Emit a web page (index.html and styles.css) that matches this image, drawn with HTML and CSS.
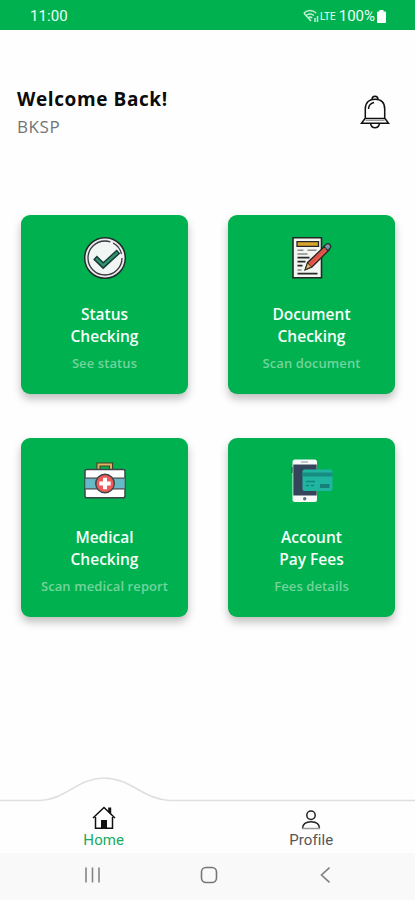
FILE: index.html
```html
<!DOCTYPE html>
<html lang="en">
<head>
<meta charset="utf-8">
<title>Home</title>
<link rel="stylesheet" href="styles.css">
</head>
<body>
<div class="status">
  <span class="time">11:00</span>
  <div class="indicators">
    <svg class="wifi" width="17" height="14" viewBox="0 0 17 14" fill="none" stroke="#c5f0d6" stroke-width="1.500"><path d="M.8 4Q7 -.8 13.2 4M3 6.500Q7 3.300 11 6.500M5 9Q7.200 7.200 9.200 9M1 4.200L8 12M12 9v4M14.500 7v6"/></svg>
    <span class="lte">LTE</span>
    <span class="percent">100%</span>
    <svg class="battery" width="9" height="13" viewBox="0 0 9 13" fill="#fff"><path d="M2.500 0h4v1.500H8q1 0 1 1V12q0 1-1 1H1q-1 0-1-1V2.500q0-1 1-1h1.500z"/></svg>
  </div>
</div>
<header class="header">
  <div>
    <h1 class="welcome">Welcome Back!</h1>
    <p class="user">BKSP</p>
  </div>
  <svg class="bell" width="30" height="34" viewBox="0 0 30 34" fill="none" stroke="#111" stroke-width="1.500"><path d="M12 4.500Q12 1.200 15 1.200T18 4.500M5.300 23.500V14C5.300 7 9.500 4.200 15 4.200S24.700 7 24.700 14v9.500M5 23.500h20l3.500 4.700h-27zM10.500 28.500q1 4.300 4.500 4.300t4.500-4.300M8.500 14q0-5 5.500-6.500"/><path d="M5.500 25.500h19" stroke="#999" stroke-width="1"/></svg>
</header>
<main class="grid">
  <section class="card">
    <svg class="art" width="44" height="44" viewBox="0 0 44 44"><circle cx="22" cy="22" r="20.300" fill="#eee9ee" stroke="#222b2b" stroke-width="1.500"/><circle cx="22" cy="22" r="17" fill="#f1f6f5" stroke="#343a3b" stroke-width="1.300" stroke-dasharray="85 3 14 5"/><path d="M12 21.500l8.200 8L35.500 15.500" fill="none" stroke="#173b34" stroke-width="5.300"/><path d="M13 22.500l7.200 6.900 14.300-13" fill="none" stroke="#319373" stroke-width="2.400"/></svg>
    <h2 class="title">Status<br>Checking</h2>
    <p class="sub">See status</p>
  </section>
  <section class="card">
    <svg class="art" width="44" height="44" viewBox="0 0 44 44"><path d="M3 1.700h28.500v40H3z" fill="#f4f4f1" stroke="#252827" stroke-width="1.600"/><path d="M7 5.700h21.500v4.600H7z" fill="#daa52e" stroke="#252827" stroke-width="1.300"/><path d="M7.500 14.300h6m4 0h9M7.500 18h10M7.500 34h4" stroke="#868b88" stroke-width="1.500"/><path d="M7.500 21.700h12m-12 4h8m-8 4h5m-5 8h20" stroke="#272b29" stroke-width="1.700"/><path d="M15.200 33.700l2.500-7.200L35 10l4 4-17 17z" fill="#e65849" stroke="#252827" stroke-width="1.400"/><path d="M15.200 33.700l2.300-6.800 4.200 4z" fill="#e5b55a" stroke="#252827"/><path d="M34 10.500l2.200-2.300q2-1.300 3.800.5 1.700 2-.2 3.800L37.800 14.700z" fill="#7799a5" stroke="#252b2d" stroke-width="1.200"/><path d="M20 28L35.500 12.500" stroke="#d3473d"/></svg>
    <h2 class="title">Document<br>Checking</h2>
    <p class="sub">Scan document</p>
  </section>
  <section class="card">
    <svg class="art" width="44" height="44" viewBox="0 0 44 44"><path d="M15.500 11V5.500H28V11" fill="none" stroke="#493d2b" stroke-width="4.200"/><path d="M15.500 11V5.500H28V11" fill="none" stroke="#dbb365" stroke-width="2"/><rect x="2" y="10.500" width="40" height="28.200" rx="1.800" fill="#fff" stroke="#3d4548" stroke-width="1.500"/><path d="M2.500 19.500h39v10h-39z" fill="#67b9c7"/><path d="M2.500 19.200h39m-39 10.600h39" stroke="#3d4548" stroke-width="1.300"/><circle cx="22" cy="24.500" r="9.300" fill="#ee5a59" stroke="#3d4548" stroke-width="1.400"/><path d="M22 18.800v11.400M16.300 24.500h11.400" stroke="#fff" stroke-width="4"/></svg>
    <h2 class="title">Medical<br>Checking</h2>
    <p class="sub">Scan medical report</p>
  </section>
  <section class="card">
    <svg class="art" width="44" height="44" viewBox="0 0 44 44"><rect x="2.500" y=".5" width="24.500" height="42.500" rx="2.500" fill="#f8fafa"/><path d="M3.300 5.500h23.400v31H3.300z" fill="#34445a"/><path d="M2 8v6" stroke="#34445a"/><path d="M11 3h7" stroke="#9ca5aa" stroke-width="1.200"/><circle cx="14.700" cy="39.800" r="1.700" fill="#626e78"/><rect x="12.500" y="10.500" width="30" height="21.500" rx="2" fill="#1fb5a0"/><path d="M12.500 13.500h30v4h-30z" fill="#168d80"/><path d="M16 22.500h9M16 26.500h3m2 0h3" stroke="#108779" stroke-width="1.300"/><path d="M30 25h9.500v4h-9.500z" fill="#167f78"/></svg>
    <h2 class="title">Account<br>Pay Fees</h2>
    <p class="sub">Fees details</p>
  </section>
</main>
<nav class="tabs">
  <svg class="curve" width="415" height="30" viewBox="0 0 415 30" fill="none" stroke="#dfdfdf" stroke-width="1.700"><path d="M0 23.500H40C65 23 78 1 104 1S145 23 170 23.500H415"/></svg>
  <a class="tab active">
    <svg width="26" height="24" viewBox="0 0 26 24" fill="none" stroke="#111" stroke-width="1.500"><path d="M2 12L13 1.500 24 12M4.500 11v11.300h17V11"/><path d="M17.200 1.500h3v7.500l-3-3z" fill="#111" stroke="none"/><path d="M10 14h6v8.500h-6z" fill="#111" stroke="none"/></svg>
    <span>Home</span>
  </a>
  <a class="tab">
    <svg width="20" height="20" viewBox="0 0 20 20" fill="none" stroke="#222" stroke-width="1.500"><circle cx="10" cy="5.200" r="4.200"/><path d="M1.500 18.500c0-4.500 3.500-6.800 8.500-6.800s8.500 2.300 8.500 6.800"/><path d="M1 18.500h18" stroke="#999"/></svg>
    <span>Profile</span>
  </a>
</nav>
<footer class="system">
  <svg width="18" height="16" viewBox="0 0 18 16" stroke="#858585" stroke-width="1.600"><path d="M2 .5v15M8.500 .5v15M15 .5v15"/></svg>
  <svg width="18" height="18" viewBox="0 0 18 18" fill="none" stroke="#777" stroke-width="1.600"><rect x="1.500" y="1.500" width="15" height="15" rx="4.500"/></svg>
  <svg width="18" height="18" viewBox="0 0 18 18" fill="none" stroke="#808080" stroke-width="1.600"><path d="M13.500 1.700L5.500 9l8 7.300"/></svg>
</footer>
</body>
</html>
```
FILE: styles.css
```css
* {
  box-sizing: border-box;
}

body {
  margin: 0;
  width: 415px;
  height: 900px;
  display: flex;
  flex-direction: column;
  overflow: hidden;
  background: #fefefe;
  font-family: "Open Sans", "Noto Sans", sans-serif;
}

h1, h2, p {
  margin: 0;
}

.status {
  height: 30px;
  padding: 2px 29px 0 30px;
  display: flex;
  align-items: center;
  justify-content: space-between;
  background: #00b150;
  color: #ecfff4;
  font-family: Roboto, sans-serif;
}

.time {
  font-size: 15px;
  letter-spacing: 0.1px;
}

.indicators {
  display: flex;
  align-items: center;
}

.lte {
  margin-right: 3px;
  font-size: 10px;
}

.percent {
  margin-right: 2px;
  font-size: 15px;
}

.header {
  height: 185px;
  padding: 56px 25px 0 17px;
  display: flex;
  justify-content: space-between;
}

.welcome {
  font-size: 19px;
  line-height: 27px;
  font-weight: 700;
  letter-spacing: 0.6px;
  color: #0b0b0b;
}

.user {
  font-size: 17px;
  line-height: 27px;
  font-weight: 500;
  letter-spacing: 0.6px;
  color: #747474;
}

.bell {
  margin-top: 9px;
}

.grid {
  padding: 0 20px 0 21px;
  display: grid;
  grid-template-columns: 167px 167px;
  grid-auto-rows: 179px;
  justify-content: space-between;
  row-gap: 44px;
}

.card {
  padding-top: 21px;
  display: flex;
  flex-direction: column;
  align-items: center;
  text-align: center;
  border-radius: 9px;
  background: #00b150;
  box-shadow: 0 5px 8px rgba(0, 0, 0, 0.25);
}

.title {
  margin-top: 23px;
  font-size: 15.500px;
  line-height: 22px;
  font-weight: 600;
  color: #f6fffa;
}

.sub {
  margin-top: 6px;
  font-size: 13px;
  line-height: 20px;
  font-weight: 600;
  letter-spacing: 0.1px;
  color: #73d49c;
}

.tabs {
  position: relative;
  height: 76px;
  margin-top: auto;
  padding-bottom: 2px;
  display: grid;
  grid-template-columns: 1fr 1fr;
  align-items: end;
}

.curve {
  position: absolute;
  top: 0;
  left: 0;
}

.tab {
  display: flex;
  flex-direction: column;
  align-items: center;
  font-family: Roboto, sans-serif;
  font-size: 15px;
  line-height: 21px;
  letter-spacing: 0.1px;
  color: #555;
}

.active {
  color: #18aa63;
}

.system {
  height: 47px;
  padding: 0 81px 3px 84px;
  display: flex;
  align-items: center;
  justify-content: space-between;
  background: #f9f9f9;
}
```
